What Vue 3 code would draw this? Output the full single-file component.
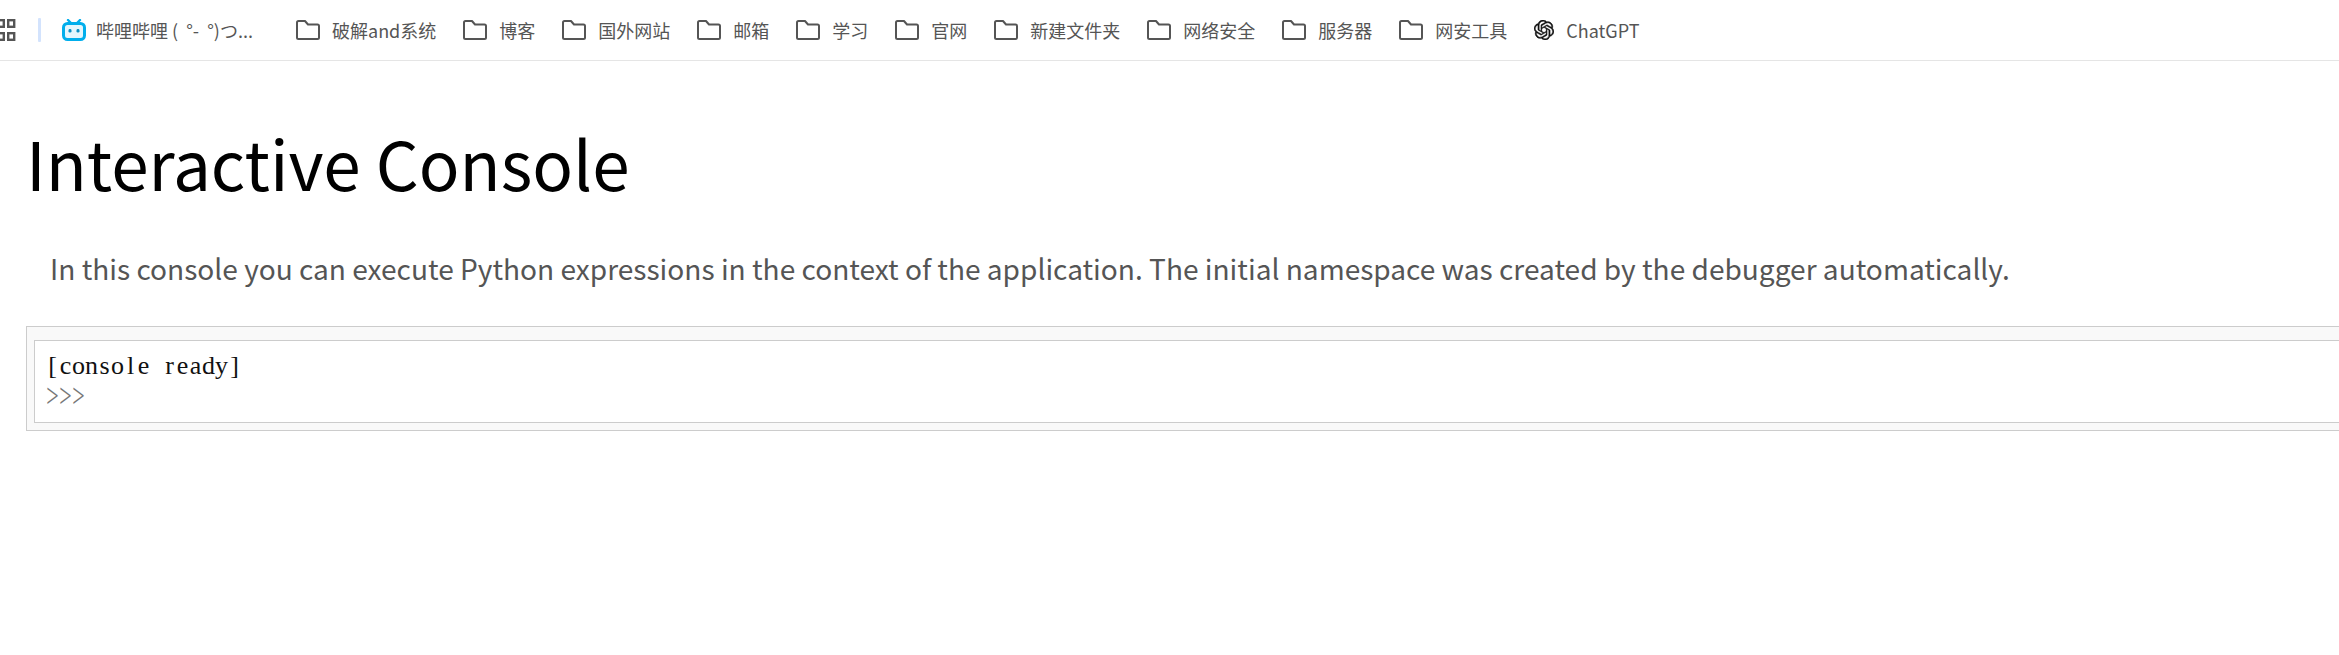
<script setup>
const bookmarks = ['破解and系统', '博客', '国外网站', '邮箱', '学习', '官网', '新建文件夹', '网络安全', '服务器', '网安工具']
const readyChars = '[console ready]'.split('')
const promptChars = '>>>'.split('')
</script>

<template>
  <div class="page">
    <nav class="bar">
      <svg class="grid" width="16" height="22" viewBox="0 0 16 22">
        <g fill="none" stroke="#555" stroke-width="2.4">
          <rect x="-3" y="1.2" width="6.8" height="6.6" />
          <rect x="8.2" y="1.2" width="6" height="6.6" />
          <rect x="-3" y="14.2" width="6.8" height="6.6" />
          <rect x="8.2" y="14.2" width="6" height="6.6" />
        </g>
      </svg>
      <span class="sep"></span>
      <a class="item bili">
        <svg width="24" height="22" viewBox="0 0 24 22">
          <path d="M6 1 L9.5 4.5 M18 1 L14.5 4.5" stroke="#00aeec" stroke-width="2.4" stroke-linecap="round" />
          <rect x="1.5" y="4.5" width="21" height="16" rx="4" fill="#e4f6fd" stroke="#00aeec" stroke-width="3" />
          <rect x="6.5" y="10" width="3" height="3.6" rx="1.4" fill="#0a8fc4" />
          <rect x="14.5" y="10" width="3" height="3.6" rx="1.4" fill="#0a8fc4" />
        </svg>
        <span class="bili-label">哔哩哔哩 (&nbsp;&nbsp;°-&nbsp;&nbsp;°)つ...</span>
      </a>
      <a v-for="b in bookmarks" :key="b" class="item">
        <svg class="folder" width="24" height="20" viewBox="0 0 24 20">
          <path d="M2.5 1 H9 L12 4.5 H21.5 A1.5 1.5 0 0 1 23 6 V17.5 A1.5 1.5 0 0 1 21.5 19 H2.5 A1.5 1.5 0 0 1 1 17.5 V2.5 A1.5 1.5 0 0 1 2.5 1 Z" fill="none" stroke="#555" stroke-width="2" stroke-linejoin="round" />
        </svg>
        <span>{{ b }}</span>
      </a>
      <a class="item">
        <svg width="20" height="20" viewBox="0 0 24 24">
          <path fill="#111" stroke="#111" stroke-width="0.5" d="M22.2819 9.8211a5.9847 5.9847 0 0 0-.5157-4.9108 6.0462 6.0462 0 0 0-6.5098-2.9A6.0651 6.0651 0 0 0 4.9807 4.1818a5.9847 5.9847 0 0 0-3.9977 2.9 6.0462 6.0462 0 0 0 .7427 7.0966 5.98 5.98 0 0 0 .511 4.9107 6.051 6.051 0 0 0 6.5146 2.9001A5.9847 5.9847 0 0 0 13.2599 24a6.0557 6.0557 0 0 0 5.7718-4.2058 5.9894 5.9894 0 0 0 3.9977-2.9001 6.0557 6.0557 0 0 0-.7475-7.0729zm-9.022 12.6081a4.4755 4.4755 0 0 1-2.8764-1.0408l.1419-.0804 4.7783-2.7582a.7948.7948 0 0 0 .3927-.6813v-6.7369l2.02 1.1686a.071.071 0 0 1 .038.052v5.5826a4.504 4.504 0 0 1-4.4945 4.4944zm-9.6607-4.1254a4.4708 4.4708 0 0 1-.5346-3.0137l.142.0852 4.783 2.7582a.7712.7712 0 0 0 .7806 0l5.8428-3.3685v2.3324a.0804.0804 0 0 1-.0332.0615L9.74 19.9502a4.4992 4.4992 0 0 1-6.1408-1.6464zM2.3408 7.8956a4.485 4.485 0 0 1 2.3655-1.9728V11.6a.7664.7664 0 0 0 .3879.6765l5.8144 3.3543-2.0201 1.1685a.0757.0757 0 0 1-.071 0l-4.8303-2.7865A4.504 4.504 0 0 1 2.3408 7.872zm16.5963 3.8558L13.1038 8.364 15.1192 7.2a.0757.0757 0 0 1 .071 0l4.8303 2.7913a4.4944 4.4944 0 0 1-.6765 8.1042v-5.6772a.79.79 0 0 0-.407-.667zm2.0107-3.0231l-.142-.0852-4.7735-2.7818a.7759.7759 0 0 0-.7854 0L9.409 9.2297V6.8974a.0662.0662 0 0 1 .0284-.0615l4.8303-2.7866a4.4992 4.4992 0 0 1 6.6802 4.66zM8.3065 12.863l-2.02-1.1638a.0804.0804 0 0 1-.038-.0567V6.0742a4.4992 4.4992 0 0 1 7.3757-3.4537l-.142.0805L8.704 5.459a.7948.7948 0 0 0-.3927.6813zm1.0976-2.3654l2.602-1.4998 2.6069 1.4998v2.9994l-2.5974 1.4997-2.6067-1.4997Z" />
        </svg>
        <span>ChatGPT</span>
      </a>
    </nav>

    <main class="content">
      <h1 class="title">Interactive Console</h1>
      <p class="intro">In this console you can execute Python expressions in the context of the application. The initial namespace was created by the debugger automatically.</p>
      <div class="console">
        <div class="output">
          <div class="line"><span v-for="(c, i) in readyChars" :key="i" class="ch">{{ c }}</span></div>
          <div class="line prompt"><span v-for="(c, i) in promptChars" :key="i" class="ch tall">{{ c }}</span></div>
        </div>
      </div>
    </main>
  </div>
</template>

<style>
html, body { margin: 0; background: #fff; overflow: hidden; }
</style>

<style scoped>
.page {
  width: 2339px;
  height: 655px;
  overflow: hidden;
  font-family: "Noto Sans CJK SC", "Noto Sans", sans-serif;
}
.bar {
  height: 60px;
  border-bottom: 1px solid #e5e5e5;
  display: flex;
  align-items: center;
  color: #555;
  font-size: 18px;
}
.grid { flex: none; margin-right: 22px; }
.sep { width: 3px; height: 24px; background: #d3e3fd; border-radius: 1px; margin-right: 21px; }
.item { display: flex; align-items: center; gap: 12px; white-space: nowrap; margin-right: 27px; }
.bili { gap: 10px; }
.bili-label { display: block; width: 173px; overflow: hidden; }
.content { padding-left: 26px; }
.title {
  margin: 51px 0 0;
  font-size: 67.4px;
  font-weight: 400;
  line-height: 100px;
  color: #000;
}
.intro {
  margin: 35px 0 0 24px;
  font-size: 28.08px;
  line-height: 42px;
  color: #555;
  white-space: nowrap;
}
.console {
  margin-top: 37px;
  width: 2400px;
  box-sizing: border-box;
  height: 105px;
  border: 1px solid #ccc;
  background: #f9f9f9;
  padding: 13px 0 0 7px;
}
.output {
  box-sizing: border-box;
  height: 83px;
  border: 1px solid #ccc;
  background: #fff;
  padding: 10px 0 0 11px;
  font-family: "Liberation Serif", serif;
  font-size: 26px;
  line-height: 30px;
  color: #111;
}
.line { height: 30px; white-space: nowrap; }
.ch { display: inline-block; width: 13px; text-align: center; }
.prompt { color: #777; font-size: 22px; }
.tall { transform: scaleY(1.5); }
</style>
